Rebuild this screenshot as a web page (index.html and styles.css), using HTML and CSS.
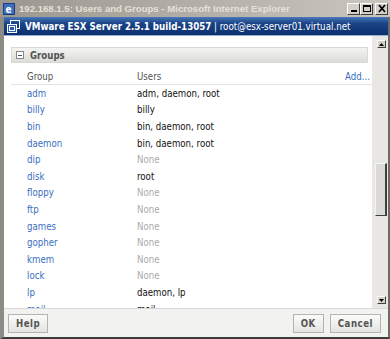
FILE: index.html
```html
<!DOCTYPE html>
<html>
<head>
<meta charset="utf-8">
<link rel="stylesheet" href="styles.css">
</head>
<body>
<div class="window">
  <div class="titlebar">
    <span class="ie-icon"><svg width="12" height="12" viewBox="0 0 12 12"><rect x="0.5" y="0.5" width="11" height="11" fill="#3b6fc4" stroke="#1c3c80"/><text x="2.5" y="10" font-family="DejaVu Sans" font-size="10" font-weight="bold" fill="#fff">e</text></svg></span>
    <span class="title-text">192.168.1.5: Users and Groups - Microsoft Internet Explorer</span>
    <span class="winbtns">
      <span class="wbtn"><svg width="10" height="9" viewBox="0 0 10 9"><rect x="2" y="6" width="6" height="2" fill="#000"/></svg></span>
      <span class="wbtn"><svg width="10" height="9" viewBox="0 0 10 9"><rect x="1.5" y="1.5" width="7" height="6" fill="none" stroke="#000"/><rect x="1" y="1" width="8" height="2" fill="#000"/></svg></span>
      <span class="wbtn close"><svg width="10" height="9" viewBox="0 0 10 9"><path d="M2 1 L8 8 M8 1 L2 8" stroke="#000" stroke-width="1.8"/></svg></span>
    </span>
  </div>
  <div class="appbar">
    <span class="vm-icon"><svg width="13" height="13" viewBox="0 0 13 13"><rect x="3.5" y="0.5" width="9" height="8" fill="none" stroke="#fff"/><rect x="0.5" y="4.5" width="9" height="8" fill="#2a5aa0" stroke="#fff"/><rect x="2.5" y="6.5" width="5" height="4" fill="none" stroke="#fff"/></svg></span>
    <span class="app-title"><b>VMware ESX Server 2.5.1 build-13057</b> <span class="user">| root@esx-server01.virtual.net</span></span>
  </div>
  <div class="main">
    <div class="content">
      <div class="section-head"><span class="toggle"></span>Groups</div>
      <div class="table">
        <div class="row head"><span class="c1">Group</span><span class="c2">Users</span><a class="add">Add...</a></div>
        <div class="row"><a class="c1">adm</a><span class="c2">adm, daemon, root</span></div>
        <div class="row"><a class="c1">billy</a><span class="c2">billy</span></div>
        <div class="row"><a class="c1">bin</a><span class="c2">bin, daemon, root</span></div>
        <div class="row"><a class="c1">daemon</a><span class="c2">bin, daemon, root</span></div>
        <div class="row"><a class="c1">dip</a><span class="c2 none">None</span></div>
        <div class="row"><a class="c1">disk</a><span class="c2">root</span></div>
        <div class="row"><a class="c1">floppy</a><span class="c2 none">None</span></div>
        <div class="row"><a class="c1">ftp</a><span class="c2 none">None</span></div>
        <div class="row"><a class="c1">games</a><span class="c2 none">None</span></div>
        <div class="row"><a class="c1">gopher</a><span class="c2 none">None</span></div>
        <div class="row"><a class="c1">kmem</a><span class="c2 none">None</span></div>
        <div class="row"><a class="c1">lock</a><span class="c2 none">None</span></div>
        <div class="row"><a class="c1">lp</a><span class="c2">daemon, lp</span></div>
        <div class="row"><a class="c1">mail</a><span class="c2">mail</span></div>
      </div>
    </div>
    <div class="scrollbar">
      <div class="arrow up"><svg width="5" height="3" viewBox="0 0 5 3"><path d="M0 3 L2.5 0 L5 3Z" fill="#000"/></svg></div>
      <div class="track"><div class="thumb"></div></div>
      <div class="arrow down"><svg width="5" height="3" viewBox="0 0 5 3"><path d="M0 0 L2.5 3 L5 0Z" fill="#000"/></svg></div>
    </div>
  </div>
  <div class="footer">
    <button class="btn">Help</button>
    <span class="spacer"></span>
    <button class="btn">OK</button>
    <button class="btn">Cancel</button>
  </div>
</div>
</body>
</html>
```
FILE: styles.css
```css
* { box-sizing: border-box; }
html, body { margin: 0; padding: 0; }
body { width: 390px; height: 339px; overflow: hidden; font-family: "DejaVu Sans Condensed", "DejaVu Sans", Verdana, sans-serif; font-stretch: condensed; }
.window {
  width: 390px; height: 339px;
  display: flex; flex-direction: column;
  background: #d4d0c8;
  border-left: 4px solid #8e8a84;
  border-right: 2px solid #6e6a66;
  border-bottom: 2px solid #3c3c3c;
}
.titlebar {
  height: 17px; flex: none;
  display: flex; align-items: center;
  background: linear-gradient(90deg, #9c9890, #b8b4ac 60%, #cac6be);
  margin-left: -4px; margin-right: -2px;
  padding: 0 2px 0 3px;
}
.ie-icon { display: flex; width: 12px; height: 12px; margin-right: 4px; }
.title-text { color: #e4e0d8; font-family: "Liberation Sans", Tahoma, sans-serif; font-weight: bold; font-size: 9.6px; flex: 1; white-space: nowrap; overflow: hidden; }
.winbtns { display: flex; }
.wbtn { width: 13px; height: 12px; display: flex; align-items: center; justify-content: center; background: #d4d0c8; border: 1px solid; border-color: #fff #404040 #404040 #fff; }
.wbtn.close { margin-left: 2px; }
.appbar {
  height: 19px; flex: none;
  display: flex; align-items: center;
  background: linear-gradient(#4a78b8, #1a4488 35%, #0c2f6e);
  border-bottom: 1px solid #9cb0d0;
  padding-left: 3px;
}
.vm-icon { display: flex; margin-right: 5px; }
.app-title { color: #fff; font-size: 9px; white-space: nowrap; }
.app-title b { font-weight: bold; font-size: 9.7px; }
.user { font-size: 9.7px; }
.main { flex: 1; display: flex; min-height: 0; background: #fff; }
.content { flex: 1; overflow: hidden; padding: 11px 0 0 7px; }
.section-head {
  width: 357px; height: 16px;
  background: linear-gradient(#f4f4f2, #dcdcd8);
  border: 1px solid #d8d8d4;
  display: flex; align-items: center;
  font-size: 9.6px; font-weight: bold; color: #555;
  padding-left: 4px;
}
.toggle { width: 8px; height: 8px; border: 1px solid #888; margin-right: 6px; background: #fff linear-gradient(#555, #555) center / 4px 1px no-repeat; }
.table { padding: 5px 0 0 0; width: 361px; }
.row { display: flex; align-items: center; height: 16.6px; font-size: 9.6px; color: #111; }
.row.head { color: #555; border-bottom: 1px solid #e4e4e4; height: 17px; }
.c1 { width: 126px; padding-left: 16px; color: #3a6ec0; flex: none; }
.row.head .c1 { color: #555; }
.c2 { flex: 1; }
.none { color: #aaa; }
.add { color: #3a6ec0; padding-right: 2px; }
.scrollbar { width: 16px; flex: none; display: flex; flex-direction: column; align-items: center; background: #e8e7e4; padding: 4px 0 4px 2px; }
.arrow { width: 9px; height: 8px; display: flex; align-items: center; justify-content: center; background: #d4d0c8; border: 1px solid; border-color: #fff #404040 #404040 #fff; flex: none; }
.track { flex: 1; width: 12px; padding-top: 115px; }
.thumb { height: 53px; background: #dcdad6; border: 1px solid; border-color: #f4f4f4 #404040 #404040 #f4f4f4; border-right-width: 2px; }
.footer { height: 29px; flex: none; display: flex; align-items: center; padding: 0 7px 0 4px; gap: 6px; background: #f2f2f0; border-top: 1px solid #d8d8d8; }
.spacer { flex: 1; }
.btn { font-family: "DejaVu Sans Condensed", "DejaVu Sans", sans-serif; font-size: 9.6px; font-weight: bold; color: #555; height: 19px; padding: 0 7px; background: linear-gradient(#fbfbfa, #e4e4e0); border: 1px solid #b4b4b0; border-radius: 0; letter-spacing: 0.5px; }
```
